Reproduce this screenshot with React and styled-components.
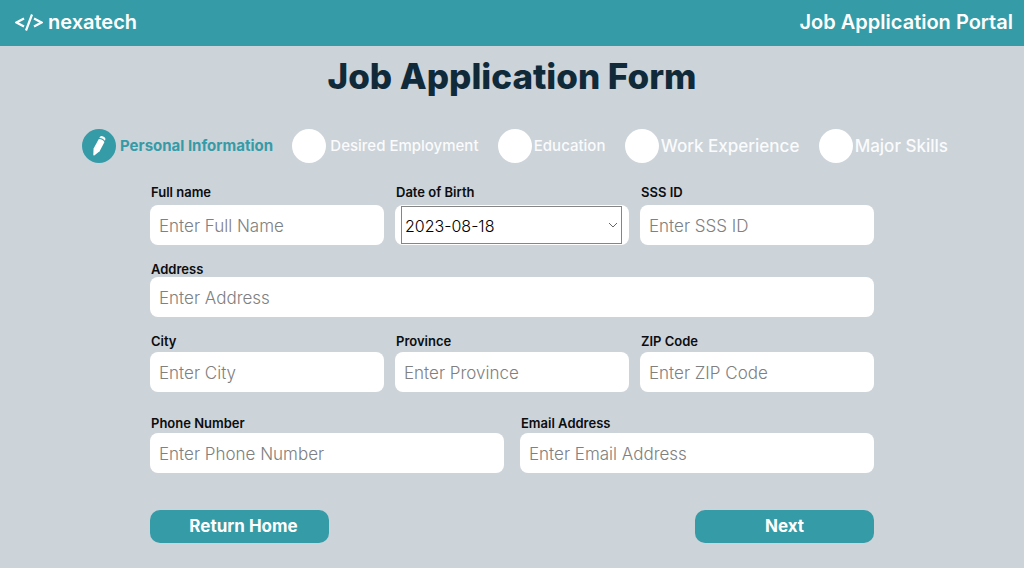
import React from "react";
import styled, { createGlobalStyle } from "styled-components";

const TEAL = "#359ba7";

const GlobalStyle = createGlobalStyle`
  * { box-sizing: border-box; }
  body {
    margin: 0;
    min-height: 100vh;
    background: #ccd3d9;
    font-family: Inter, "Open Sans", sans-serif;
    color: #0b0d0f;
  }
`;

const Header = styled.header`
  display: flex;
  align-items: center;
  justify-content: space-between;
  height: 46px;
  padding: 0 11px 2px 15px;
  background: ${TEAL};
  color: #fff;
  font-size: 20px;
  line-height: 24px;
  font-weight: 600;
`;

const Brand = styled.a`
  display: flex;
  align-items: center;
  gap: 5px;
  color: inherit;
  text-decoration: none;
`;

const CodeMark = styled.svg`
  width: 28px;
  height: 20px;
  fill: none;
  stroke: #fff;
  stroke-width: 2.2;
`;

const Title = styled.h1`
  margin: 10px 0 0;
  text-align: center;
  color: #102a3a;
  font-size: 35px;
  line-height: 40px;
  font-weight: 800;
`;

const Stepper = styled.ol`
  display: flex;
  justify-content: space-between;
  list-style: none;
  margin: 33px 0 0;
  padding: 0 76px 0 82px;
`;

const Step = styled.li`
  display: flex;
  align-items: center;
  gap: ${(p) => (p.$tight ? 2 : 4)}px;
  white-space: nowrap;
  font-size: ${(p) => (p.$large ? 17 : 15)}px;
  line-height: 20px;
  font-weight: ${(p) => (p.$active ? 700 : 500)};
  color: ${(p) => (p.$active ? TEAL : "#fafbfc")};
`;

const Dot = styled.span`
  display: grid;
  place-items: center;
  width: 34px;
  height: 34px;
  border-radius: 50%;
  background: ${(p) => (p.$active ? TEAL : "#fff")};
`;

const Form = styled.form`
  padding: 21px 150px 25px;
`;

const Row = styled.div`
  display: grid;
  grid-template-columns: repeat(${(p) => p.$columns}, minmax(0, 1fr));
  column-gap: ${(p) => (p.$columns === 2 ? 16 : 11)}px;
  margin-bottom: ${(p) => p.$after || 16}px;
`;

const Field = styled.div`
  display: flex;
  flex-direction: column;
  gap: ${(p) => p.$gap}px;
`;

const Label = styled.label`
  padding-left: 1px;
  font-size: 13px;
  line-height: 16px;
  font-weight: 600;
`;

const TextInput = styled.input`
  width: 100%;
  height: 40px;
  padding: 1px 9px 0;
  border: 0;
  border-radius: 8px;
  background: #fff;
  font: 300 17px/20px Inter, "Open Sans", sans-serif;
  color: #111;
  &::placeholder { color: #808080; opacity: 1; }
`;

const SelectBox = styled.div`
  display: grid;
  align-items: center;
  height: 40px;
  padding: 1px 7px 1px 6px;
  border-radius: 8px;
  background: #fff;
`;

const Select = styled.select`
  grid-area: 1 / 1;
  width: 100%;
  height: 38px;
  padding: 2px 24px 0 3px;
  border: 1px solid #858585;
  border-radius: 0;
  background: #fff;
  appearance: none;
  font: 300 16px/20px Inter, "Open Sans", sans-serif;
  color: #000;
`;

const Chevron = styled.svg`
  grid-area: 1 / 1;
  justify-self: end;
  width: 10px;
  height: 6px;
  margin-right: 4px;
  fill: none;
  stroke: #666;
  pointer-events: none;
`;

const Actions = styled.div`
  display: flex;
  justify-content: space-between;
`;

const Button = styled.button`
  width: 179px;
  height: 33px;
  padding: 0 0 1px ${(p) => (p.$inset ? 8 : 0)}px;
  border: 0;
  border-radius: 10px;
  background: ${TEAL};
  color: #fff;
  font: 700 17px/20px Inter, "Open Sans", sans-serif;
`;

const steps = [
  { name: "Personal Information", active: true },
  { name: "Desired Employment" },
  { name: "Education", tight: true },
  { name: "Work Experience", tight: true, large: true },
  { name: "Major Skills", tight: true, large: true },
];

const rows = [
  {
    gap: 5,
    fields: [
      { id: "name", label: "Full name", hint: "Enter Full Name" },
      { id: "birth", label: "Date of Birth", options: ["2023-08-18"] },
      { id: "sss", label: "SSS ID", hint: "Enter SSS ID" },
    ],
  },
  { gap: 0, fields: [{ id: "address", label: "Address", hint: "Enter Address" }] },
  {
    gap: 3,
    after: 23,
    fields: [
      { id: "city", label: "City", hint: "Enter City" },
      { id: "province", label: "Province", hint: "Enter Province" },
      { id: "zip", label: "ZIP Code", hint: "Enter ZIP Code" },
    ],
  },
  {
    gap: 2,
    after: 37,
    fields: [
      { id: "phone", label: "Phone Number", hint: "Enter Phone Number", type: "tel" },
      { id: "email", label: "Email Address", hint: "Enter Email Address", type: "email" },
    ],
  },
];

function Pencil() {
  return (
    <svg width="16" height="22" viewBox="0 0 16 22" fill="#fff" aria-hidden="true">
      <path d="M7.8 4 Q11.8 4 13.4 7.2L8.6 16.2 3.6 20.2Q2.3 20.9 2.3 19.5L2.6 13.6Z" />
      <path d="M8.4 2.9 8.8 2.1Q9.8.6 11.5 1.2L13.2 2.1Q14.9 3.1 14.3 4.8L13.9 5.8Q12.2 3 8.4 2.9Z" />
    </svg>
  );
}

export default function App() {
  return (
    <>
      <GlobalStyle />
      <Header>
        <Brand href="#">
          <CodeMark viewBox="0 0 28 20" aria-hidden="true">
            <path d="M9 6.5 1.5 10.5 9 14.5M17 2.5 11 18.5M19 6.5 26.5 10.5 19 14.5" />
          </CodeMark>
          nexatech
        </Brand>
        <span>Job Application Portal</span>
      </Header>
      <main>
        <Title>Job Application Form</Title>
        <Stepper>
          {steps.map((s) => (
            <Step key={s.name} $active={s.active} $tight={s.tight} $large={s.large}>
              <Dot $active={s.active}>{s.active && <Pencil />}</Dot>
              {s.name}
            </Step>
          ))}
        </Stepper>
        <Form onSubmit={(e) => e.preventDefault()}>
          {rows.map((row) => (
            <Row key={row.fields[0].id} $columns={row.fields.length} $after={row.after}>
              {row.fields.map((f) => (
                <Field key={f.id} $gap={row.gap}>
                  <Label htmlFor={f.id}>{f.label}</Label>
                  {f.options ? (
                    <SelectBox>
                      <Select id={f.id}>
                        {f.options.map((o) => (
                          <option key={o}>{o}</option>
                        ))}
                      </Select>
                      <Chevron viewBox="0 0 10 6" aria-hidden="true">
                        <path d="M1 1 5 5 9 1" />
                      </Chevron>
                    </SelectBox>
                  ) : (
                    <TextInput id={f.id} type={f.type || "text"} placeholder={f.hint} />
                  )}
                </Field>
              ))}
            </Row>
          ))}
          <Actions>
            <Button type="button" $inset>Return Home</Button>
            <Button type="submit">Next</Button>
          </Actions>
        </Form>
      </main>
    </>
  );
}
